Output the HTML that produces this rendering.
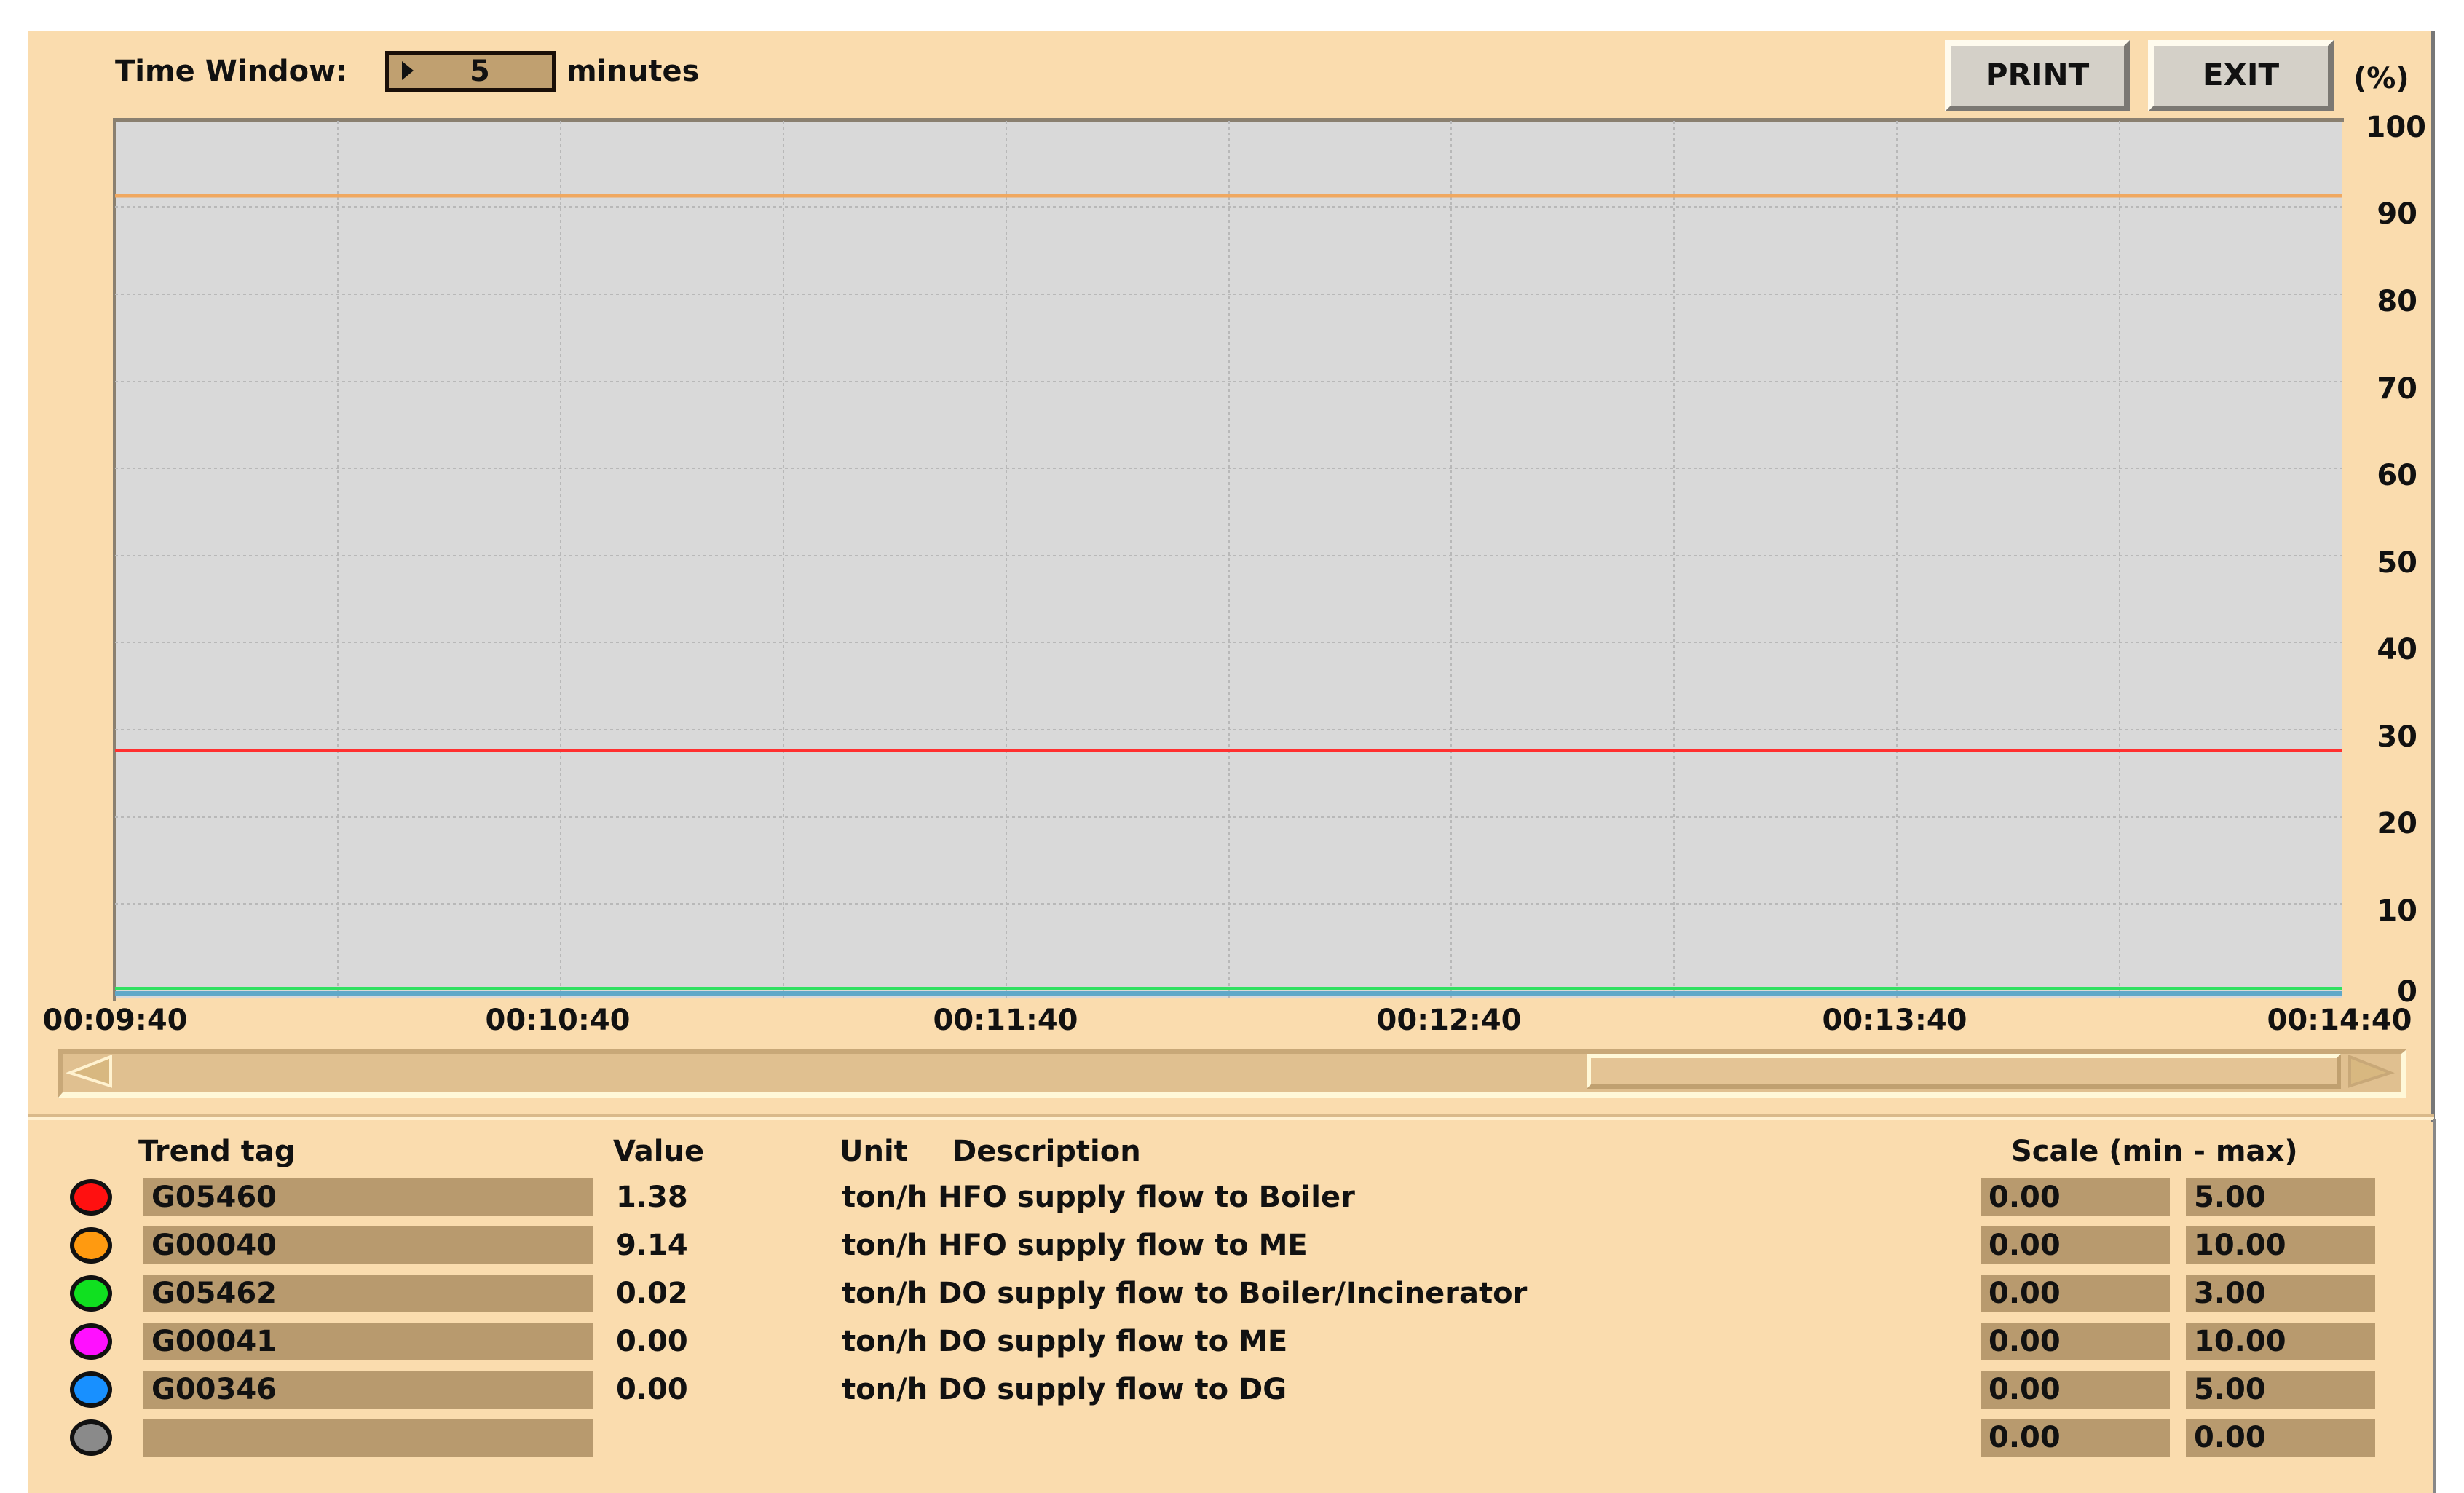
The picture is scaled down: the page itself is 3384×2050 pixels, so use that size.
<!DOCTYPE html>
<html><head><meta charset="utf-8"><style>
*{margin:0;padding:0;box-sizing:border-box}
body{width:3384px;height:2050px;background:#fff;position:relative;overflow:hidden;font-family:"DejaVu Sans","Liberation Sans",sans-serif;font-weight:bold;color:#111}
.a{position:absolute;white-space:nowrap}
.t{font-size:40px;line-height:56px}
.box{position:absolute;background:#b89a6e;height:52px}
.c{position:absolute;width:58px;height:50px;border-radius:50%;border:6px solid #111}
.btn{position:absolute;background:#d4d0c8;border-top:8px solid #fffbee;border-left:8px solid #fffbee;border-right:8px solid #7b7873;border-bottom:8px solid #7b7873;font-size:42px;text-align:center;line-height:80px}
.yl{position:absolute;width:120px;text-align:right;font-size:40px;line-height:50px;left:3200px}
.xl{position:absolute;font-size:40px;line-height:50px;width:300px;text-align:center}
</style></head><body>
<div class="a" style="left:39px;top:43px;width:3304px;height:2007px;background:#fadcae"></div>
<div class="a" style="left:3339px;top:43px;width:5px;height:1497px;background:#777"></div>
<div class="a" style="left:39px;top:1529px;width:3304px;height:5px;background:#d9b98a"></div>
<div class="a" style="left:39px;top:1534px;width:3304px;height:4px;background:#fff0d0"></div>
<div class="a" style="left:3341px;top:1537px;width:5px;height:513px;background:#888"></div>

<div class="a t" style="left:158px;top:70px">Time Window:</div>
<div class="a" style="left:529px;top:70px;width:234px;height:56px;background:#c0a070;border:5px solid #1a0f08"></div>
<div class="a" style="left:552px;top:84px;width:0;height:0;border-left:16px solid #111;border-top:13px solid transparent;border-bottom:13px solid transparent"></div>
<div class="a t" style="left:645px;top:70px">5</div>
<div class="a t" style="left:778px;top:70px">minutes</div>

<div class="btn" style="left:2671px;top:55px;width:254px;height:98px">PRINT</div>
<div class="btn" style="left:2950px;top:55px;width:255px;height:98px">EXIT</div>
<div class="a t" style="left:3232px;top:80px">(%)</div>

<svg class="a" style="left:155px;top:162px" width="3067" height="1215" viewBox="155 162 3067 1215">
<rect x="158" y="166" width="3059" height="1205" fill="#d9d9d9"/>
<rect x="156" y="162" width="3063" height="5" fill="#8a8070"/>
<rect x="155" y="162" width="4" height="1212" fill="#8a8070"/>
<g stroke="#b8b8b8" stroke-width="2" stroke-dasharray="4 4">
<line x1="464" y1="166" x2="464" y2="1371"/><line x1="770" y1="166" x2="770" y2="1371"/><line x1="1076" y1="166" x2="1076" y2="1371"/><line x1="1382" y1="166" x2="1382" y2="1371"/><line x1="1688" y1="166" x2="1688" y2="1371"/><line x1="1993" y1="166" x2="1993" y2="1371"/><line x1="2299" y1="166" x2="2299" y2="1371"/><line x1="2605" y1="166" x2="2605" y2="1371"/><line x1="2911" y1="166" x2="2911" y2="1371"/>
<line x1="158" y1="284" x2="3217" y2="284"/><line x1="158" y1="404" x2="3217" y2="404"/><line x1="158" y1="524" x2="3217" y2="524"/><line x1="158" y1="643" x2="3217" y2="643"/><line x1="158" y1="763" x2="3217" y2="763"/><line x1="158" y1="882" x2="3217" y2="882"/><line x1="158" y1="1002" x2="3217" y2="1002"/><line x1="158" y1="1122" x2="3217" y2="1122"/><line x1="158" y1="1241" x2="3217" y2="1241"/>
</g>
<line x1="158" y1="269" x2="3217" y2="269" stroke="#f0a860" stroke-width="5"/>
<line x1="158" y1="1031" x2="3217" y2="1031" stroke="#ff3030" stroke-width="4"/>
<line x1="158" y1="1357" x2="3217" y2="1357" stroke="#30e060" stroke-width="4"/>
<line x1="158" y1="1364" x2="3217" y2="1364" stroke="#60a8c8" stroke-width="6"/>
</svg>

<div class="yl" style="top:150px;left:3212px">100</div>
<div class="yl" style="top:269px">90</div>
<div class="yl" style="top:389px">80</div>
<div class="yl" style="top:509px">70</div>
<div class="yl" style="top:628px">60</div>
<div class="yl" style="top:748px">50</div>
<div class="yl" style="top:867px">40</div>
<div class="yl" style="top:987px">30</div>
<div class="yl" style="top:1106px">20</div>
<div class="yl" style="top:1226px">10</div>
<div class="yl" style="top:1337px">0</div>

<div class="xl" style="left:8px;top:1376px">00:09:40</div>
<div class="xl" style="left:616px;top:1376px">00:10:40</div>
<div class="xl" style="left:1231px;top:1376px">00:11:40</div>
<div class="xl" style="left:1840px;top:1376px">00:12:40</div>
<div class="xl" style="left:2452px;top:1376px">00:13:40</div>
<div class="xl" style="left:3063px;top:1376px">00:14:40</div>

<div class="a" style="left:80px;top:1441px;width:3225px;height:66px;background:#e0c090;border-top:6px solid #c8a878;border-left:6px solid #c8a878;border-bottom:7px solid #fff8d8;border-right:7px solid #fff8d8"></div>
<svg class="a" style="left:88px;top:1447px" width="70" height="50"><polygon points="64,4 8,26 64,44" fill="#d8b880" stroke="#fff2d0" stroke-width="4"/></svg>
<div class="a" style="left:2179px;top:1447px;width:1036px;height:48px;background:#e4c495;border-top:6px solid #fff8d8;border-left:6px solid #fff8d8;border-bottom:6px solid #c0a070;border-right:6px solid #c0a070"></div>
<svg class="a" style="left:3221px;top:1447px" width="70" height="50"><polygon points="6,4 62,26 6,44" fill="#d8b880" stroke="#c8a878" stroke-width="4"/></svg>

<div class="a t" style="left:190px;top:1553px">Trend tag</div>
<div class="a t" style="left:842px;top:1553px">Value</div>
<div class="a t" style="left:1153px;top:1553px">Unit</div>
<div class="a t" style="left:1308px;top:1553px">Description</div>
<div class="a t" style="left:2762px;top:1553px">Scale (min - max)</div>

<div class="c" style="left:96px;top:1619px;background:#ff1010"></div>
<div class="box" style="left:197px;top:1618px;width:617px"></div><div class="a t" style="left:208px;top:1616px">G05460</div>
<div class="a t" style="left:846px;top:1616px">1.38</div>
<div class="a t" style="left:1156px;top:1616px">ton/h HFO supply flow to Boiler</div>
<div class="box" style="left:2720px;top:1618px;width:260px"></div><div class="a t" style="left:2731px;top:1616px">0.00</div>
<div class="box" style="left:3002px;top:1618px;width:260px"></div><div class="a t" style="left:3013px;top:1616px">5.00</div>

<div class="c" style="left:96px;top:1685px;background:#ff9a10"></div>
<div class="box" style="left:197px;top:1684px;width:617px"></div><div class="a t" style="left:208px;top:1682px">G00040</div>
<div class="a t" style="left:846px;top:1682px">9.14</div>
<div class="a t" style="left:1156px;top:1682px">ton/h HFO supply flow to ME</div>
<div class="box" style="left:2720px;top:1684px;width:260px"></div><div class="a t" style="left:2731px;top:1682px">0.00</div>
<div class="box" style="left:3002px;top:1684px;width:260px"></div><div class="a t" style="left:3013px;top:1682px">10.00</div>

<div class="c" style="left:96px;top:1751px;background:#10e020"></div>
<div class="box" style="left:197px;top:1750px;width:617px"></div><div class="a t" style="left:208px;top:1748px">G05462</div>
<div class="a t" style="left:846px;top:1748px">0.02</div>
<div class="a t" style="left:1156px;top:1748px">ton/h DO supply flow to Boiler/Incinerator</div>
<div class="box" style="left:2720px;top:1750px;width:260px"></div><div class="a t" style="left:2731px;top:1748px">0.00</div>
<div class="box" style="left:3002px;top:1750px;width:260px"></div><div class="a t" style="left:3013px;top:1748px">3.00</div>

<div class="c" style="left:96px;top:1817px;background:#ff10ff"></div>
<div class="box" style="left:197px;top:1816px;width:617px"></div><div class="a t" style="left:208px;top:1814px">G00041</div>
<div class="a t" style="left:846px;top:1814px">0.00</div>
<div class="a t" style="left:1156px;top:1814px">ton/h DO supply flow to ME</div>
<div class="box" style="left:2720px;top:1816px;width:260px"></div><div class="a t" style="left:2731px;top:1814px">0.00</div>
<div class="box" style="left:3002px;top:1816px;width:260px"></div><div class="a t" style="left:3013px;top:1814px">10.00</div>

<div class="c" style="left:96px;top:1883px;background:#1890ff"></div>
<div class="box" style="left:197px;top:1882px;width:617px"></div><div class="a t" style="left:208px;top:1880px">G00346</div>
<div class="a t" style="left:846px;top:1880px">0.00</div>
<div class="a t" style="left:1156px;top:1880px">ton/h DO supply flow to DG</div>
<div class="box" style="left:2720px;top:1882px;width:260px"></div><div class="a t" style="left:2731px;top:1880px">0.00</div>
<div class="box" style="left:3002px;top:1882px;width:260px"></div><div class="a t" style="left:3013px;top:1880px">5.00</div>

<div class="c" style="left:96px;top:1949px;background:#8a8a8a"></div>
<div class="box" style="left:197px;top:1948px;width:617px"></div>
<div class="box" style="left:2720px;top:1948px;width:260px"></div><div class="a t" style="left:2731px;top:1946px">0.00</div>
<div class="box" style="left:3002px;top:1948px;width:260px"></div><div class="a t" style="left:3013px;top:1946px">0.00</div>
</body></html>
